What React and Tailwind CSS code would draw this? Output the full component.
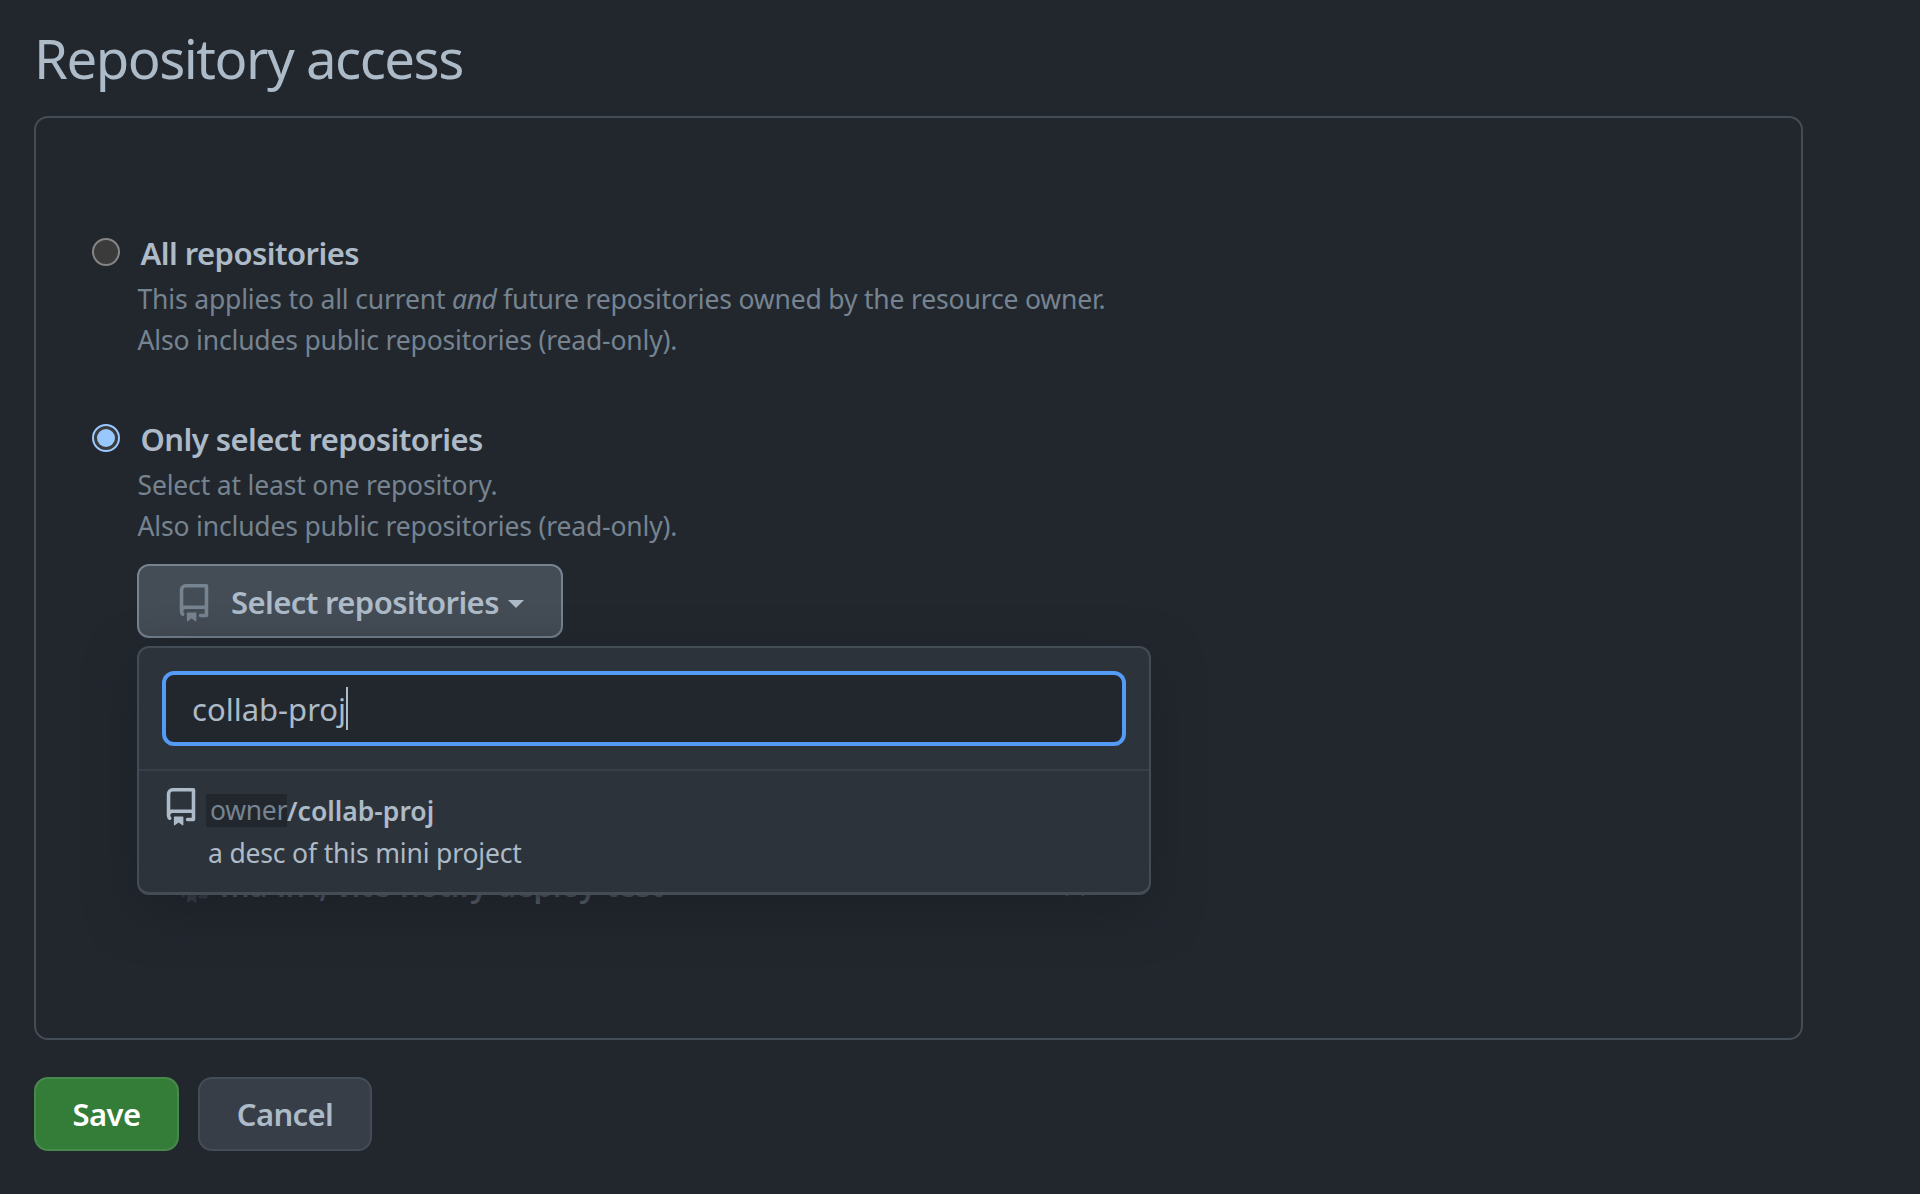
import React from 'react';

function RepoIcon({ className }) {
  return (
    <svg viewBox="0 0 16 16" fill="currentColor" className={className}>
      <path d="M2 2.5A2.5 2.5 0 0 1 4.5 0h8.75a.75.75 0 0 1 .75.75v12.5a.75.75 0 0 1-.75.75h-2.5a.75.75 0 0 1 0-1.5h1.75v-2h-8a1 1 0 0 0-.714 1.7.75.75 0 1 1-1.072 1.05A2.495 2.495 0 0 1 2 11.5Zm10.5-1h-8a1 1 0 0 0-1 1v6.708A2.486 2.486 0 0 1 4.5 9h8ZM5 12.25a.25.25 0 0 1 .25-.25h3.5a.25.25 0 0 1 .25.25v3.25a.25.25 0 0 1-.4.2l-1.45-1.087a.249.249 0 0 0-.3 0L5.4 15.7a.25.25 0 0 1-.4-.2Z" />
    </svg>
  );
}

function Radio({ checked }) {
  return checked ? (
    <span className="mt-[10px] flex size-7 shrink-0 items-center justify-center rounded-full border-2 border-[#99c8ff] bg-[#3b3b3b]">
      <span className="size-[18px] rounded-full bg-[#99c8ff]" />
    </span>
  ) : (
    <span className="mt-[10px] size-7 shrink-0 rounded-full border-2 border-[#858585] bg-[#3b3b3b]" />
  );
}

function Option({ checked, title, children }) {
  return (
    <div className="flex h-[186px] items-start">
      <Radio checked={checked} />
      <div className="ml-[18px]">
        <div className="ml-[3px] h-[51px] text-[31px] leading-[50px] font-semibold tracking-[-0.55px] whitespace-nowrap">{title}</div>
        <div className="text-[26.5px] leading-[41px] tracking-[-0.17px] whitespace-nowrap text-[#768390]">{children}</div>
      </div>
    </div>
  );
}

export default function App() {
  return (
    <div className="h-[1194px] w-[1920px] overflow-hidden bg-[#22272e] pl-[34px] font-['Noto_Sans',sans-serif] text-[#adbac7]">
      <h1 className="h-[116px] pt-[21px] text-[54.5px] leading-[74px] font-normal tracking-[-1.5px] whitespace-nowrap">Repository access</h1>
      <section className="h-[924px] w-[1769px] rounded-[14px] border-2 border-[#444c56] pt-[110px] pl-[55.5px]">
        <Option title="All repositories">
          This applies to all current <em className="tracking-[-0.5px]">and</em> future repositories owned by the resource owner.
          <br />
          Also includes public repositories (read-only).
        </Option>
        <Option checked title="Only select repositories">
          Select at least one repository.
          <br />
          Also includes public repositories (read-only).
        </Option>
        <div className="relative -mt-[36px] ml-[45.5px]">
          <button className="flex h-[74px] w-[426px] items-center rounded-xl border-2 border-[#768390] bg-[#444c56] pl-[36px] text-[31px] font-semibold">
            <RepoIcon className="mt-1 size-[38px] text-[#768390]" />
            <span className="mt-[2px] ml-[18px] tracking-[-0.6px] whitespace-nowrap">Select repositories</span>
            <span className="mt-[6px] ml-[9px] border-x-8 border-t-8 border-x-transparent border-t-[#adbac7]" />
          </button>
          <div className="mt-[8px] flex h-[257px] w-[1014px] items-end pl-[39px] text-[31px] leading-[32px] font-semibold text-[#87949f]">
            <RepoIcon className="size-[36px] text-[#545d68]" />
            <span className="mb-[2px] ml-2 tracking-[-0.3px] whitespace-nowrap">ma-irA, vite-notify-deploy-test</span>
            <svg viewBox="0 0 20 20" className="mr-[66px] mb-[6px] ml-auto size-5 text-[#6b7683]" stroke="currentColor" strokeWidth="2.5" strokeLinecap="round">
              <path d="M2 2L18 18M18 2L2 18" />
            </svg>
          </div>
          <div className="absolute top-[82px] left-0 h-[249px] w-[1014px] rounded-xl border-2 border-b-[3px] border-[#444c56] bg-[#2d333b] shadow-[0_16px_48px_rgba(28,33,40,0.95)]">
            <div className="h-[123px] border-b-2 border-[#373e47] px-[23px] pt-[23px]">
              <div className="flex h-[75px] items-center rounded-xl border-4 border-[#539bf5] bg-[#22272e] pl-[26px] text-[31px]">
                <span className="mt-[2px]">collab-proj</span>
                <span className="h-[43px] w-[2px] bg-[#adbac7]" />
              </div>
            </div>
            <div className="flex pt-[17px] pl-[23px]">
              <RepoIcon className="size-[38px]" />
              <div className="ml-[6px] pt-[2px]">
                <div className="flex h-[41px] items-center text-[26.5px] leading-[32px]">
                  <span className="h-[33px] w-[81px] bg-[#22272e] pl-[4px] tracking-[-0.3px] text-[#768390]">owner</span>
                  <span className="font-semibold">/collab-proj</span>
                </div>
                <div className="mt-[2px] ml-[2px] text-[26.5px] leading-[41px] tracking-[-0.17px]">a desc of this mini project</div>
              </div>
            </div>
          </div>
        </div>
      </section>
      <div className="mt-[37px] flex gap-[19px] text-[31px] font-semibold tracking-[-0.6px]">
        <button className="h-[74px] w-[145px] rounded-[14px] border-2 border-[#46894b] bg-[#347d39] text-white">Save</button>
        <button className="h-[74px] w-[174px] rounded-[14px] border-2 border-[#444c56] bg-[#373e47]">Cancel</button>
      </div>
    </div>
  );
}
